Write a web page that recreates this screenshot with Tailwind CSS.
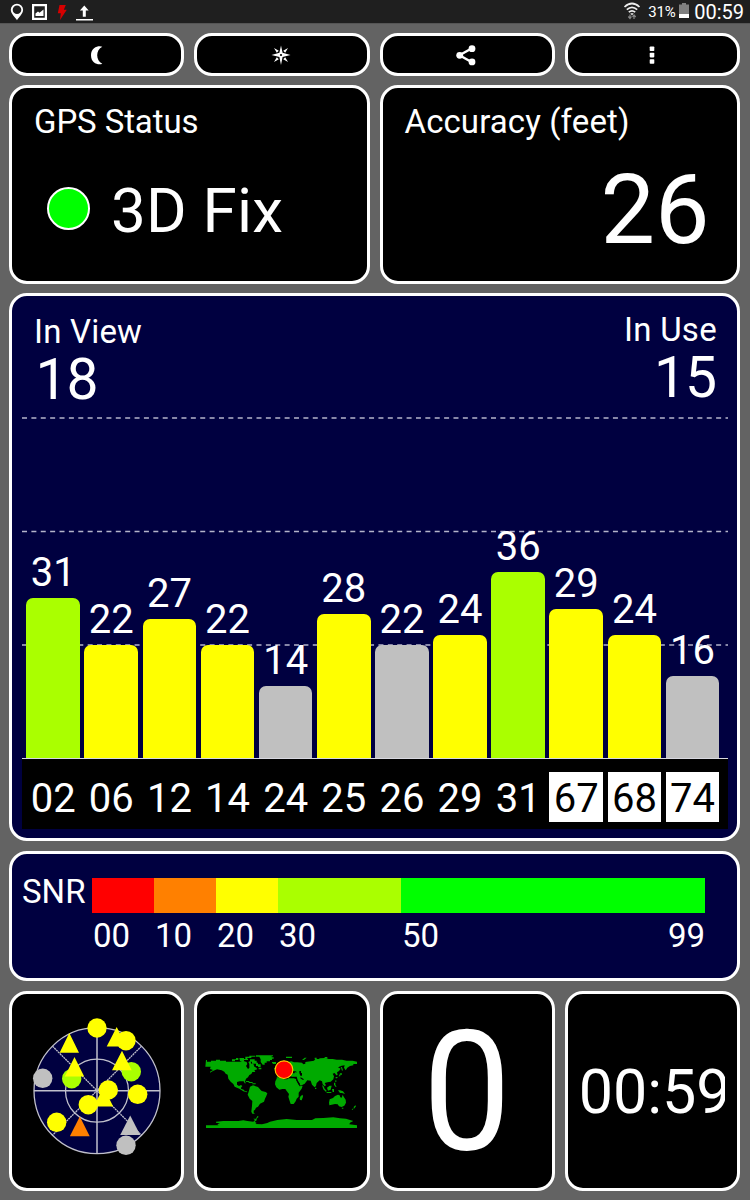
<!DOCTYPE html>
<html lang="en">
<head>
<meta charset="utf-8">
<title>GPS Status</title>
<script src="https://cdn.jsdelivr.net/npm/@tailwindcss/browser@4"></script>
</head>
<body class="flex h-[1200px] w-[750px] flex-col overflow-hidden bg-[#636363] font-['Roboto',sans-serif] text-white">

<header class="flex h-[24px] shrink-0 items-start justify-between border-b border-[#555555] bg-[#1f1f1f]">
  <svg class="h-[23px] w-[110px]" viewBox="0 0 110 23">
    <path fill="#fff" fill-rule="evenodd" d="M17 20.3C15.4 17 10.8 14 10.8 9.7a6.1 5.9 0 0 1 12.3 0C23.1 14 18.600 17 17 20.300ZM17 5.500a4.300 4.300 0 1 0 0 8.600a4.300 4.300 0 0 0 0-8.600Z"/>
    <path fill="#fff" fill-rule="evenodd" d="M32 4h15v16H32ZM34.200 6.200v11.600h10.600V6.200Z"/>
    <path fill="#fff" d="M35.500 16v-2.500l2.500-2l1.500 1.300l4-3.300V16Z"/>
    <path fill="#d60000" d="M59.500 5h6.300l-2 4.800h3L60 20l.800-6.700h-3Z"/>
    <path fill="#fff" d="M84.300 5.500l4.400 5h-2.900v6.300h-3v-6.300h-2.900ZM76 18.900h17v1.700H76Z"/>
  </svg>
  <div class="flex h-[23px] items-start">
    <svg class="mt-[2px] h-[18px] w-[18px]" viewBox="0 0 18 18" fill="none" stroke="#eee" stroke-width="1.700">
      <path d="M1.500 5Q9-2 16.500 5M3.800 7.700Q9 3 14.200 7.700M5.800 10.200Q9 7.400 12.200 10.200"/>
      <path d="M7.300 11.300h3.400L9 13.500Z" fill="#eee" stroke="none"/>
      <path stroke="#888" stroke-width="1.200" d="M7 12.500v4M5.300 14.500L7 16.500l1.500-2M11 17v-4M9.500 15l1.500-2l1.700 2"/>
    </svg>
    <span class="ml-[7px] mt-[4.500px] w-[29px] text-[15px] leading-none tracking-[-0.200px]">31%</span>
    <svg class="ml-[2px] mt-[3px] h-[15px] w-[10px]" viewBox="0 0 10 15"><path fill="#808080" d="M3 0h4v1.500h3V11H0V1.500h3Z"/><path fill="#fff" d="M0 11h10v4H0Z"/></svg>
    <span class="ml-[5px] mr-[6px] mt-[1.500px] text-[20px] leading-none">00:59</span>
  </div>
</header>

<main class="flex flex-1 flex-col pl-[9px] pr-[10px] pt-[9px]">
  <nav class="grid h-[43px] shrink-0 grid-cols-4 gap-[10px]">
    <button class="flex items-center justify-center rounded-[18px] border-3 border-white bg-black" aria-label="Night mode">
      <svg class="h-[20px] w-[20px]" viewBox="0 0 20 20"><path fill="#fff" d="M15.300 1.700C12.500.300 4 1.500 4 10.200S12 20.200 15.300 18.700C8.500 15.500 8.500 5 15.300 1.700Z"/></svg>
    </button>
    <button class="flex items-center justify-center rounded-[18px] border-3 border-white bg-black pr-[1px]" aria-label="Compass">
      <svg class="h-[20px] w-[20px]" viewBox="-10 -10 20 20">
        <path fill="#fff" d="M0-9.500L1.600-2.300L9.500 0L1.600 1.900L0 10L-1.600 1.900L-9.500 0L-1.600-2.300Z"/>
        <path fill="#fff" d="M7-7L4.200-2.200L2.200-4.200ZM7 7L4.200 2.200L2.200 4.200ZM-7 7L-4.200 2.200L-2.200 4.200ZM-7-7L-4.200-2.200L-2.200-4.200Z"/>
        <circle r="1.100" fill="#000"/>
      </svg>
    </button>
    <button class="flex items-center justify-center rounded-[18px] border-3 border-white bg-black pr-[2px]" aria-label="Share">
      <svg class="h-[22px] w-[22px]" viewBox="0 0 22 22" fill="#fff"><path fill="none" stroke="#fff" stroke-width="2.400" d="M16.500 4.500L4.500 11.300L16.500 18"/><circle cx="4.700" cy="11.300" r="3.400"/><circle cx="17" cy="4.700" r="3.400"/><circle cx="17" cy="17.900" r="3.400"/></svg>
    </button>
    <button class="flex items-center justify-center rounded-[18px] border-3 border-white bg-black" aria-label="Menu">
      <svg class="h-[20px] w-[6px]" viewBox="0 0 6 20" fill="#fff"><rect x=".700" y="1.500" width="4.600" height="4.600" rx=".800"/><rect x=".700" y="7.800" width="4.600" height="4.600" rx=".800"/><rect x=".700" y="14.200" width="4.600" height="4.600" rx=".800"/></svg>
    </button>
  </nav>

  <section class="mt-[9px] grid h-[199px] shrink-0 grid-cols-2 gap-[10px]">
    <div class="flex flex-col rounded-[18px] border-3 border-white bg-black pl-[22px] pt-[17px]">
      <h2 class="text-[33px] leading-none tracking-[-0.100px]">GPS Status</h2>
      <div class="mt-[42px] flex items-start">
        <span class="ml-[13px] mt-[6.500px] h-[43px] w-[43px] rounded-full border-2 border-white bg-[#00ff00]"></span>
        <span class="ml-[21px] whitespace-nowrap text-[62px] leading-none tracking-[0.200px]">3D Fix</span>
      </div>
    </div>
    <div class="flex flex-col rounded-[18px] border-3 border-white bg-black pl-[22px] pt-[17px]">
      <h2 class="whitespace-nowrap text-[33px] leading-none tracking-[0.100px]">Accuracy (feet)</h2>
      <span class="mr-[27.500px] mt-[24px] self-end text-[97px] leading-none">26</span>
    </div>
  </section>

  <section class="mt-[9px] flex h-[548px] shrink-0 flex-col rounded-[18px] border-3 border-white bg-[#000040]">
    <div class="flex h-[122px] shrink-0 justify-between pl-[22px] pr-[20px] pt-[17px]">
      <div class="flex flex-col pt-[2px]">
        <span class="text-[33px] leading-none tracking-[0.200px]">In View</span>
        <span class="ml-[1.500px] mt-[3px] text-[57px] leading-none tracking-[-1px]">18</span>
      </div>
      <div class="flex flex-col items-end">
        <span class="text-[33px] leading-none tracking-[0.300px]">In Use</span>
        <span class="mr-[1px] mt-[3px] text-[57px] leading-none tracking-[-1px]">15</span>
      </div>
    </div>
    <div class="relative ml-[10px] mr-[9px] h-[341px] shrink-0 border-b border-[#d8d8e0]">
      <svg class="absolute left-0 top-0 h-[341px] w-full overflow-visible" viewBox="0 0 706 341" preserveAspectRatio="none" stroke="#b4b4ca" stroke-width="1.600" stroke-dasharray="5 4.380">
        <path d="M0 0H706M0 113.500H706M0 227H706"/>
      </svg>
      <div class="relative flex h-full items-end gap-[4.450px] pl-[4.300px] text-[40px] leading-none">
        <div class="flex w-[53.700px] flex-col items-center"><span class="mb-[5px]">31</span><i class="w-full rounded-t-[7px] bg-[#aaff00]" style="height:160px"></i></div>
        <div class="flex w-[53.700px] flex-col items-center"><span class="mb-[5px]">22</span><i class="w-full rounded-t-[7px] bg-[#ffff00]" style="height:113px"></i></div>
        <div class="flex w-[53.700px] flex-col items-center"><span class="mb-[5px]">27</span><i class="w-full rounded-t-[7px] bg-[#ffff00]" style="height:139px"></i></div>
        <div class="flex w-[53.700px] flex-col items-center"><span class="mb-[5px]">22</span><i class="w-full rounded-t-[7px] bg-[#ffff00]" style="height:113px"></i></div>
        <div class="flex w-[53.700px] flex-col items-center"><span class="mb-[5px]">14</span><i class="w-full rounded-t-[7px] bg-[#c0c0c0]" style="height:72px"></i></div>
        <div class="flex w-[53.700px] flex-col items-center"><span class="mb-[5px]">28</span><i class="w-full rounded-t-[7px] bg-[#ffff00]" style="height:144px"></i></div>
        <div class="flex w-[53.700px] flex-col items-center"><span class="mb-[5px]">22</span><i class="w-full rounded-t-[7px] bg-[#c0c0c0]" style="height:113px"></i></div>
        <div class="flex w-[53.700px] flex-col items-center"><span class="mb-[5px]">24</span><i class="w-full rounded-t-[7px] bg-[#ffff00]" style="height:123px"></i></div>
        <div class="flex w-[53.700px] flex-col items-center"><span class="mb-[5px]">36</span><i class="w-full rounded-t-[7px] bg-[#aaff00]" style="height:186px"></i></div>
        <div class="flex w-[53.700px] flex-col items-center"><span class="mb-[5px]">29</span><i class="w-full rounded-t-[7px] bg-[#ffff00]" style="height:149.500px"></i></div>
        <div class="flex w-[53.700px] flex-col items-center"><span class="mb-[5px]">24</span><i class="w-full rounded-t-[7px] bg-[#ffff00]" style="height:123px"></i></div>
        <div class="flex w-[53.700px] flex-col items-center"><span class="mb-[5px]">16</span><i class="w-full rounded-t-[7px] bg-[#c0c0c0]" style="height:82px"></i></div>
      </div>
    </div>
    <div class="ml-[10px] mr-[9px] flex h-[70px] shrink-0 gap-[4.450px] bg-black pl-[4.300px] pt-[13px] text-center text-[40px] leading-[53px]">
      <span class="h-[50px] w-[53.700px]">02</span>
      <span class="h-[50px] w-[53.700px]">06</span>
      <span class="h-[50px] w-[53.700px]">12</span>
      <span class="h-[50px] w-[53.700px]">14</span>
      <span class="h-[50px] w-[53.700px]">24</span>
      <span class="h-[50px] w-[53.700px]">25</span>
      <span class="h-[50px] w-[53.700px]">26</span>
      <span class="h-[50px] w-[53.700px]">29</span>
      <span class="h-[50px] w-[53.700px]">31</span>
      <span class="h-[50px] w-[53.700px] bg-white text-black">67</span>
      <span class="h-[50px] w-[53.700px] bg-white text-black">68</span>
      <span class="h-[50px] w-[53.700px] bg-white text-black">74</span>
    </div>
  </section>

  <section class="mt-[10px] flex h-[130px] shrink-0 rounded-[18px] border-3 border-white bg-[#000040] text-[33px] leading-none">
    <span class="ml-[10px] mt-[21px] w-[70px]">SNR</span>
    <div class="mt-[24px] w-[613px]">
      <div class="flex h-[35px]">
        <i class="w-[62px] bg-[#ff0000]"></i>
        <i class="w-[62px] bg-[#ff8000]"></i>
        <i class="w-[62px] bg-[#ffff00]"></i>
        <i class="w-[123px] bg-[#aaff00]"></i>
        <i class="flex-1 bg-[#00ff00]"></i>
      </div>
      <div class="mt-[6px] flex pl-[1px]">
        <span class="w-[62px]">00</span>
        <span class="w-[62px]">10</span>
        <span class="w-[62px]">20</span>
        <span class="w-[123px]">30</span>
        <span class="flex-1">50</span>
        <span>99</span>
      </div>
    </div>
  </section>

  <section class="mt-[10px] grid h-[200px] shrink-0 grid-cols-4 gap-[10px]">
    <div class="flex items-center justify-center overflow-hidden rounded-[18px] border-3 border-white bg-black">
      <svg class="h-[194px] w-[169px] shrink-0" viewBox="12 994 169 194">
        <circle cx="97" cy="1090.700" r="63" fill="#000040"/>
        <g fill="none" stroke="#c0c0cc" stroke-width="1.300">
          <circle cx="97" cy="1090.700" r="63"/><circle cx="97" cy="1090.700" r="31.500"/>
          <path stroke-width="1.500" d="M97 1027.700v126M34 1090.700h126"/>
          <path stroke-dasharray="2 .600" d="M52.500 1046.200l89 89M141.500 1046.200l-89 89"/>
        </g>
        <g fill="#aaff00"><circle cx="131.300" cy="1071.700" r="9.700"/><circle cx="71.700" cy="1078.700" r="9.700"/></g>
        <g fill="#c0c0c0"><circle cx="42.700" cy="1078.300" r="9.700"/><circle cx="126" cy="1145.300" r="9.700"/><path d="M130.200 1115.500l10 19.500h-20Z"/></g>
        <g fill="#ffff00">
          <circle cx="97" cy="1028" r="9.700"/><circle cx="126" cy="1040.700" r="9.700"/><circle cx="108.300" cy="1090" r="9.700"/><circle cx="137.700" cy="1094.300" r="9.700"/><circle cx="88.300" cy="1104.700" r="9.700"/><circle cx="56.700" cy="1122.300" r="9.700"/>
          <path d="M69.300 1033l9.700 19.700H59.600ZM116.700 1027l9.700 19.500h-19.700ZM122 1050.700l9.700 19.500h-19.700ZM74.500 1057l9.700 19.500H64.800ZM103.500 1087l9.700 19.500H93.800Z"/>
        </g>
        <path fill="#ff8000" d="M79.800 1116.500l9.900 19.800H69.900Z"/>
      </svg>
    </div>
    <div class="flex items-center justify-center overflow-hidden rounded-[18px] border-3 border-white bg-black pb-[2px] pl-[2px]">
      <svg class="h-[100px] w-[185px] shrink-0" viewBox="0 0 555 300">
        <g fill="#00aa00">
          <path d="M48 60h3v5h12v-3h15v-3h12v3h18v3h42l8-3l12 4l2 6l-4 6l6 9l4-3v-12l-3-6l6-3l3 8l6 0l3 9l6 3l3 5l-9 3l3 5l-9 0l-3 6l-6 3l-4 7l-6 4l-3 9l3 5l-4 0l-3-6l-12 0l-8 2l0 8l6 4l6-3l4 3l-4 5l0 3l8 3l4 5l7 0l-3 3l-9-3l-12-8l-14-6l-4-8l-8-7l-7-9l-2-12l-6-3l-4-6l-8-4l-14-3l-12 5l-9 5l0-3l9-5l-9-3l2-7h-16Z"/>
          <path d="M48 60h3v9h-3ZM148 54h14v3h12v3h-12v3h-12ZM126 58h12v-4h7v6h-10v4h-9ZM166 50h12v-3h18v3h-12v4h-12v4h-6ZM180 58h14v4h6v6h4v5h8v8h-8v-3h-6v-7h-12v-6h-6ZM178 91h8v4h-8ZM206 83h8v5h-8ZM168 123h10v3h10v3h-12v-3h-8ZM187 130h10v3h-10Z"/>
          <path d="M198 46h51v3h-4v3h6v4h-5v4h-6v4h-10v4h-6v6h-6l-6-8v-8l-4-8h-10ZM246 66h12v6h-10v-3h-2Z"/>
          <path d="M180 140l9-4l15 5l8 9l3 3l12 3l5 4l-3 8l-4 8l-3 9l-12 6l-6 9l-6 3l-3 6l-4 3v6l4 3l-8 0l-3-6l2-18l1-14l-8-7l-6-12l3-9Z"/>
          <path d="M260 112h20l2 6h10l4-3h15l7 2l6 14l5 8l9-2l-3 9l-9 12v12l-6 6l-3 8l-6 8h-9l-4-12l-3-10l2-8l-7-9l-4-6h-9l-9 2l-9-7l-4-9l1-9l4-8ZM332 168l6-4l1 6l-4 11l-5-1l-1-5Z"/>
          <path d="M262 97L261 109H268L276 104L286 107L297 103L305 110H320L324 124L332 137L344 131L352 121L362 122L366 134L374 142L378 138L380 129L389 121L396 124L398 133L404 139L408 136L404 129L412 127L422 125L430 118L432 109L428 101L434 99L439 106L443 105L441 97L447 93L452 86L444 82L455 77L464 76L462 83L467 91L472 83L480 78L490 76V72H501V65L488 62H470L456 59H440L428 57H416L404 54L390 57H376L372 62L362 64L346 66V71L340 73L336 68L322 67H312L304 64L293 66L290 73L278 79L268 80L272 88L270 96Z"/>
          <path d="M260 78l6-3v10l-6 3ZM252 83h5v5h-5ZM288 50h18v4h-18ZM336 60l8-7h6l-8 7ZM366 57h8v-4h6v4ZM388 54h16v-3h8v5h-24ZM452 80l4 2l3 9l-3 1ZM450 100h6v4h-5v5h-6l-4 6h-4v-4h6l5-5ZM436 121h3v5h-3ZM375 143h4v4h-4ZM396 135l5 4l3 7l6 6l-2 4l-8-8ZM411 143l8-6l6 0l-3 12l-8 3ZM408 156h16v3h-12ZM426 147h6v9h-4ZM432 128h4v6l4 6l-4 0l-4-6ZM444 151h6l9 3l6 8l-9-3l-6 0ZM491 201l5-5l2 3l-6 7ZM485 208l6-3l-3 5Z"/>
          <path d="M419 178l10-4l6-6l9-4l5 2l2 6l4 1l3-9l3 6l6 9l1 9l-5 9l-8 4l-8-2l-4-6l-8-1l-10 2l-7 2l-1-8ZM455 203h5v3h-4Z"/>
          <path d="M48 256H86L82 253L90 250L78 248V245L100 243H145L160 241L172 243L190 245L195 240L190 236H198L202 228L206 230L200 236V241L194 245L200 249L196 252L216 253L232 249L240 245L262 240L290 237L320 240H350L366 240L376 235L400 234L430 232L450 235L468 236L480 240L490 243L480 248L478 253L501 256V264H48Z"/>
        </g>
        <g fill="#000"><path d="M308 94h8l6 3h-8v3h-6ZM328 93h5v6h3v8h-5l-3-8ZM318 114l6 9l6 9l-3 2l-8-12ZM332 112l10 6l-3 2l-8-5Z"/></g>
        <circle cx="282" cy="89" r="26.500" fill="#ff0000" stroke="#ffc800" stroke-width="3.500"/>
      </svg>
    </div>
    <div class="flex justify-center overflow-hidden rounded-[18px] border-3 border-white bg-black pt-[15px] text-[167px] leading-none"><span class="inline-block scale-x-[0.940]">0</span></div>
    <div class="overflow-hidden rounded-[18px] border-3 border-white bg-black pl-[11px] pt-[67.500px] text-[61px] leading-none">
      <div class="w-[146px] overflow-hidden whitespace-nowrap">00:59</div>
    </div>
  </section>
</main>
</body>
</html>
